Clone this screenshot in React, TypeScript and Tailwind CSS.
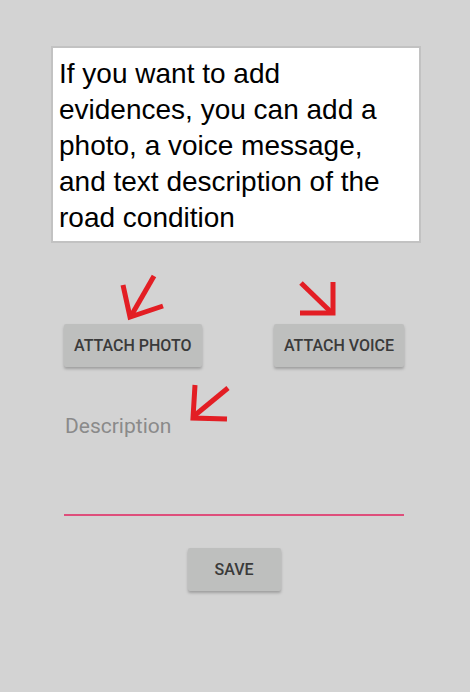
import React from 'react';

// red hint arrows drawn over the form
const Arrows: React.FC = () => (
    <svg
        className="absolute inset-0 pointer-events-none"
        width={470}
        height={692}
        viewBox="0 0 470 692"
        fill="none"
        stroke="#e31e24"
        strokeWidth={5}
    >
        {/* photo arrow, pointing down-left */}
        <line x1={154} y1={276} x2={131} y2={316} />
        <polyline points="123,285 130,317 163,306" strokeLinejoin="miter" />
        {/* voice arrow, pointing down-right */}
        <line x1={301} y1={283} x2={332} y2={313} />
        <polyline points="300,313 333,313 333,282" strokeLinejoin="miter" />
        {/* description arrow, pointing down-left */}
        <line x1={228} y1={388} x2={194} y2={416} />
        <polyline points="195,385 193,418 227,419" strokeLinejoin="miter" />
    </svg>
);

const FlatButton: React.FC<{ label: string; className?: string }> = ({ label, className = '' }) => (
    <button
        className={`h-[43px] px-[10px] rounded-[2px] bg-[#bebfbe] text-[#3a3a3a] text-[16px] font-medium shadow-[0_2px_3px_rgba(0,0,0,0.25)] ${className}`}
        style={{ fontFamily: 'Roboto, sans-serif', fontWeight: 500 }}
    >
        {label}
    </button>
);

const App: React.FC = () => {
    return (
        <div className="relative w-[470px] h-[692px] bg-[#d3d3d3] overflow-hidden">
            <div className="flex flex-col items-center pt-[46px]">
                {/* Info box */}
                <div
                    className="ml-[2px] w-[370px] h-[197px] bg-white border-2 border-[#c2c2c2] pt-[8px] pl-[6px] pr-[12px] text-[28px] leading-[36px] text-black"
                    style={{ fontFamily: '"Liberation Sans", Arial, sans-serif' }}
                >
                    If you want to add evidences, you can add a photo, a voice message, and text description of the road condition
                </div>

                {/* Form */}
                <div className="w-[340px] ml-[-2px] flex flex-col">
                    <div className="flex justify-between mt-[81px]">
                        <FlatButton label="ATTACH PHOTO" />
                        <FlatButton label="ATTACH VOICE" />
                    </div>

                    <div
                        className="mt-[47px] h-[102px] border-b-2 border-[#de4e7b] pl-[1px] text-[21px] leading-[24px] text-[#8a8a8a]"
                        style={{ fontFamily: 'Roboto, sans-serif' }}
                    >
                        Description
                    </div>

                    <div className="flex justify-center mt-[32px]">
                        <FlatButton label="SAVE" className="w-[93px]" />
                    </div>
                </div>
            </div>

            <Arrows />
        </div>
    );
};

export default App;
